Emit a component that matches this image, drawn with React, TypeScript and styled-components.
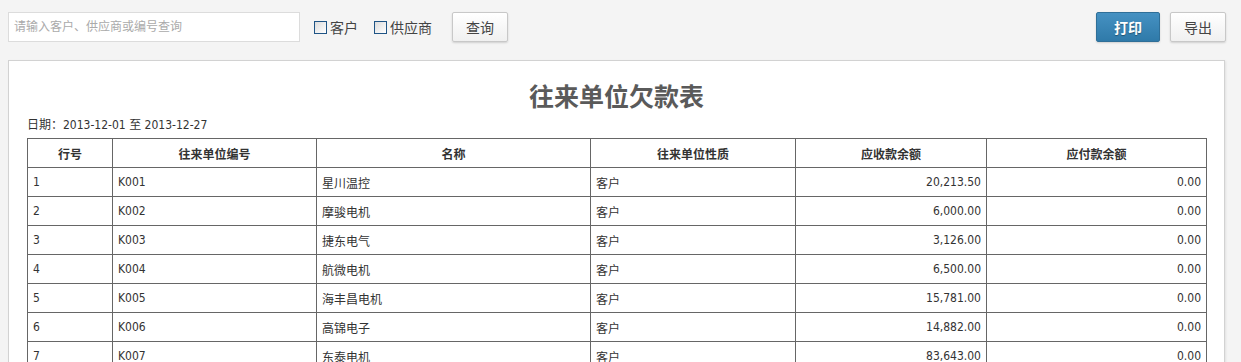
import styled, { createGlobalStyle } from 'styled-components';

const GlobalStyle = createGlobalStyle`
  html, body {
    margin: 0;
    padding: 0;
    background: #f4f4f4;
    font-family: "Liberation Sans", "Noto Sans CJK SC", sans-serif;
    color: #333;
  }
`;

const Page = styled.div`
  padding: 12px 15px 0 8px;
`;

const Toolbar = styled.div`
  display: flex;
  align-items: center;
  height: 30px;
`;

const SearchInput = styled.input`
  width: 292px;
  height: 30px;
  box-sizing: border-box;
  border: 1px solid #dcdcdc;
  background: #fff;
  padding: 0 5px;
  font-size: 12px;
  font-family: inherit;
  color: #333;
  outline: none;
  &::placeholder {
    color: #aaa;
  }
`;

const CheckLabel = styled.label<{ $gap: number }>`
  display: flex;
  align-items: center;
  margin-left: ${(p) => p.$gap}px;
  font-size: 14px;
  color: #444;
  gap: 3px;
`;

const Box = styled.span`
  width: 11px;
  height: 11px;
  border: 1px solid #1f5485;
  background: linear-gradient(135deg, #dcdcdc, #ffffff);
`;

const Button = styled.button<{ $primary?: boolean; $gap?: number }>`
  height: 30px;
  margin-left: ${(p) => p.$gap ?? 0}px;
  padding: 0 ${(p) => (p.$primary ? 17 : 13)}px;
  font-family: inherit;
  font-size: 14px;
  border-radius: 2px;
  cursor: pointer;
  color: ${(p) => (p.$primary ? '#fff' : '#444')};
  font-weight: ${(p) => (p.$primary ? 'bold' : 'normal')};
  text-shadow: ${(p) => (p.$primary ? '0 1px 1px rgba(0,0,0,0.35)' : 'none')};
  border: 1px solid ${(p) => (p.$primary ? '#2f6f98' : '#c8c8c8')};
  background: ${(p) =>
    p.$primary
      ? 'linear-gradient(#4591c2, #2f7aa9)'
      : 'linear-gradient(#ffffff, #f0f0f0)'};
  box-shadow: 0 1px 2px rgba(0, 0, 0, 0.15);
`;

const Spacer = styled.div`
  flex: 1;
`;

const Panel = styled.div`
  margin: 18px 1px 0 0;
  background: #fff;
  border: 1px solid #d2d2d2;
  box-shadow: 1px 1px 2px rgba(0, 0, 0, 0.08);
  padding: 19px 18px 20px;
  font-family: "DejaVu Sans Condensed", "DejaVu Sans", "Noto Sans CJK SC", sans-serif;
  font-stretch: condensed;
`;

const Title = styled.h1`
  margin: 0;
  text-align: center;
  font-family: "Liberation Serif", "Noto Sans CJK SC", serif;
  font-stretch: normal;
  font-size: 25px;
  line-height: 36px;
  font-weight: bold;
  color: #5a5a5a;
`;

const DateLine = styled.div`
  font-size: 12px;
  line-height: 18px;
  margin-bottom: 4px;
`;

const Table = styled.table`
  width: 100%;
  border-collapse: collapse;
  font-size: 12px;
  color: #333;
  table-layout: fixed;
`;

const Col = styled.col<{ $w: number }>`
  width: ${(p) => p.$w}px;
`;

const Th = styled.th`
  height: 28px;
  padding: 0 5px;
  border: 1px solid #666;
  font-weight: bold;
  text-align: center;
`;

const Td = styled.td<{ $right?: boolean }>`
  height: 28px;
  padding: 0 5px;
  border: 1px solid #666;
  text-align: ${(p) => (p.$right ? 'right' : 'left')};
`;

const columns = [
  { name: '行号', w: 85 },
  { name: '往来单位编号', w: 204 },
  { name: '名称', w: 274 },
  { name: '往来单位性质', w: 205 },
  { name: '应收款余额', w: 191 },
  { name: '应付款余额', w: 220 },
];

const rows = [
  ['K001', '星川温控', '20,213.50'],
  ['K002', '摩骏电机', '6,000.00'],
  ['K003', '捷东电气', '3,126.00'],
  ['K004', '航微电机', '6,500.00'],
  ['K005', '海丰昌电机', '15,781.00'],
  ['K006', '高锦电子', '14,882.00'],
  ['K007', '东泰电机', '83,643.00'],
];

export default function App() {
  return (
    <Page>
      <GlobalStyle />
      <Toolbar>
        <SearchInput placeholder="请输入客户、供应商或编号查询" />
        <CheckLabel $gap={14}>
          <Box />
          客户
        </CheckLabel>
        <CheckLabel $gap={16}>
          <Box />
          供应商
        </CheckLabel>
        <Button $gap={20}>查询</Button>
        <Spacer />
        <Button $primary>打印</Button>
        <Button $gap={10}>导出</Button>
      </Toolbar>
      <Panel>
        <Title>往来单位欠款表</Title>
        <DateLine>日期：2013-12-01 至 2013-12-27</DateLine>
        <Table>
          <colgroup>
            {columns.map((c) => (
              <Col key={c.name} $w={c.w} />
            ))}
          </colgroup>
          <thead>
            <tr>
              {columns.map((c) => (
                <Th key={c.name}>{c.name}</Th>
              ))}
            </tr>
          </thead>
          <tbody>
            {rows.map((r, i) => (
              <tr key={r[0]}>
                <Td>{i + 1}</Td>
                <Td>{r[0]}</Td>
                <Td>{r[1]}</Td>
                <Td>客户</Td>
                <Td $right>{r[2]}</Td>
                <Td $right>0.00</Td>
              </tr>
            ))}
          </tbody>
        </Table>
      </Panel>
    </Page>
  );
}
